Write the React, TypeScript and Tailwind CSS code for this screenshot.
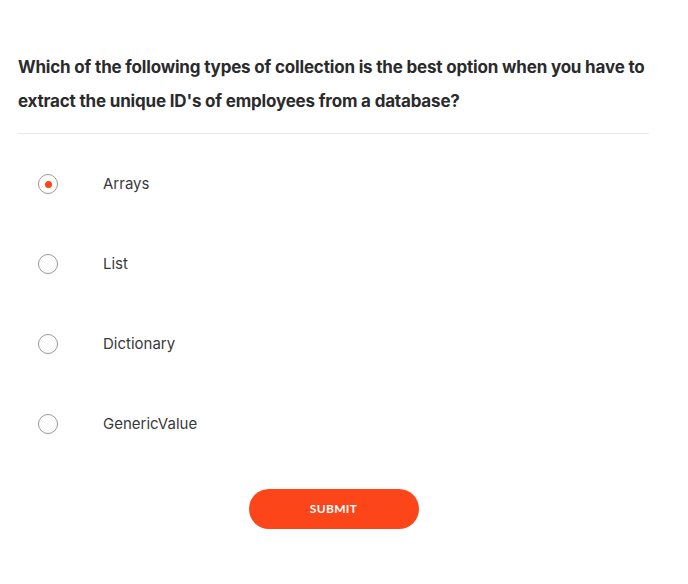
import React, { useState } from "react";

const opciones = ["Arrays", "List", "Dictionary", "GenericValue"];

const App: React.FC = () => {
  const [seleccion, setSeleccion] = useState(0);

  return (
    <div className="w-[688px] h-[584px] bg-white" style={{ fontFamily: "Inter, 'Noto Sans', sans-serif" }}>
      <div className="ml-[18px] w-[631px] pt-[50px]">
        {/* Pregunta */}
        <h2 className="text-[17px] font-bold leading-[34px] tracking-[-0.18px] text-[#2b2b2b] pb-[15px] border-b border-[#e9e9e9]">
          Which of the following types of collection is the best option when you have to extract the unique ID's of
          employees from a database?
        </h2>

        {/* Opciones */}
        <div className="flex flex-col pt-[10px]">
          {opciones.map((op, i) => (
            <label key={op} className="flex items-center h-[80px] cursor-pointer" onClick={() => setSeleccion(i)}>
              <span className="ml-[20px] w-[20px] h-[20px] rounded-full border border-[#9a9a9a] flex items-center justify-center">
                {seleccion === i && <span className="w-[7px] h-[7px] rounded-full bg-[#fc4519]" />}
              </span>
              <span className="ml-[45px] text-[15px] text-[#3a3a3a]">{op}</span>
            </label>
          ))}
        </div>

        {/* Botón */}
        <div className="flex justify-center pt-[25px]">
          <button
            className="w-[170px] h-[40px] rounded-full bg-[#fc4519] text-white text-[12px] font-bold tracking-[0.3px]"
            style={{ fontFamily: "Lato, sans-serif" }}
          >
            SUBMIT
          </button>
        </div>
      </div>
    </div>
  );
};

export default App;
